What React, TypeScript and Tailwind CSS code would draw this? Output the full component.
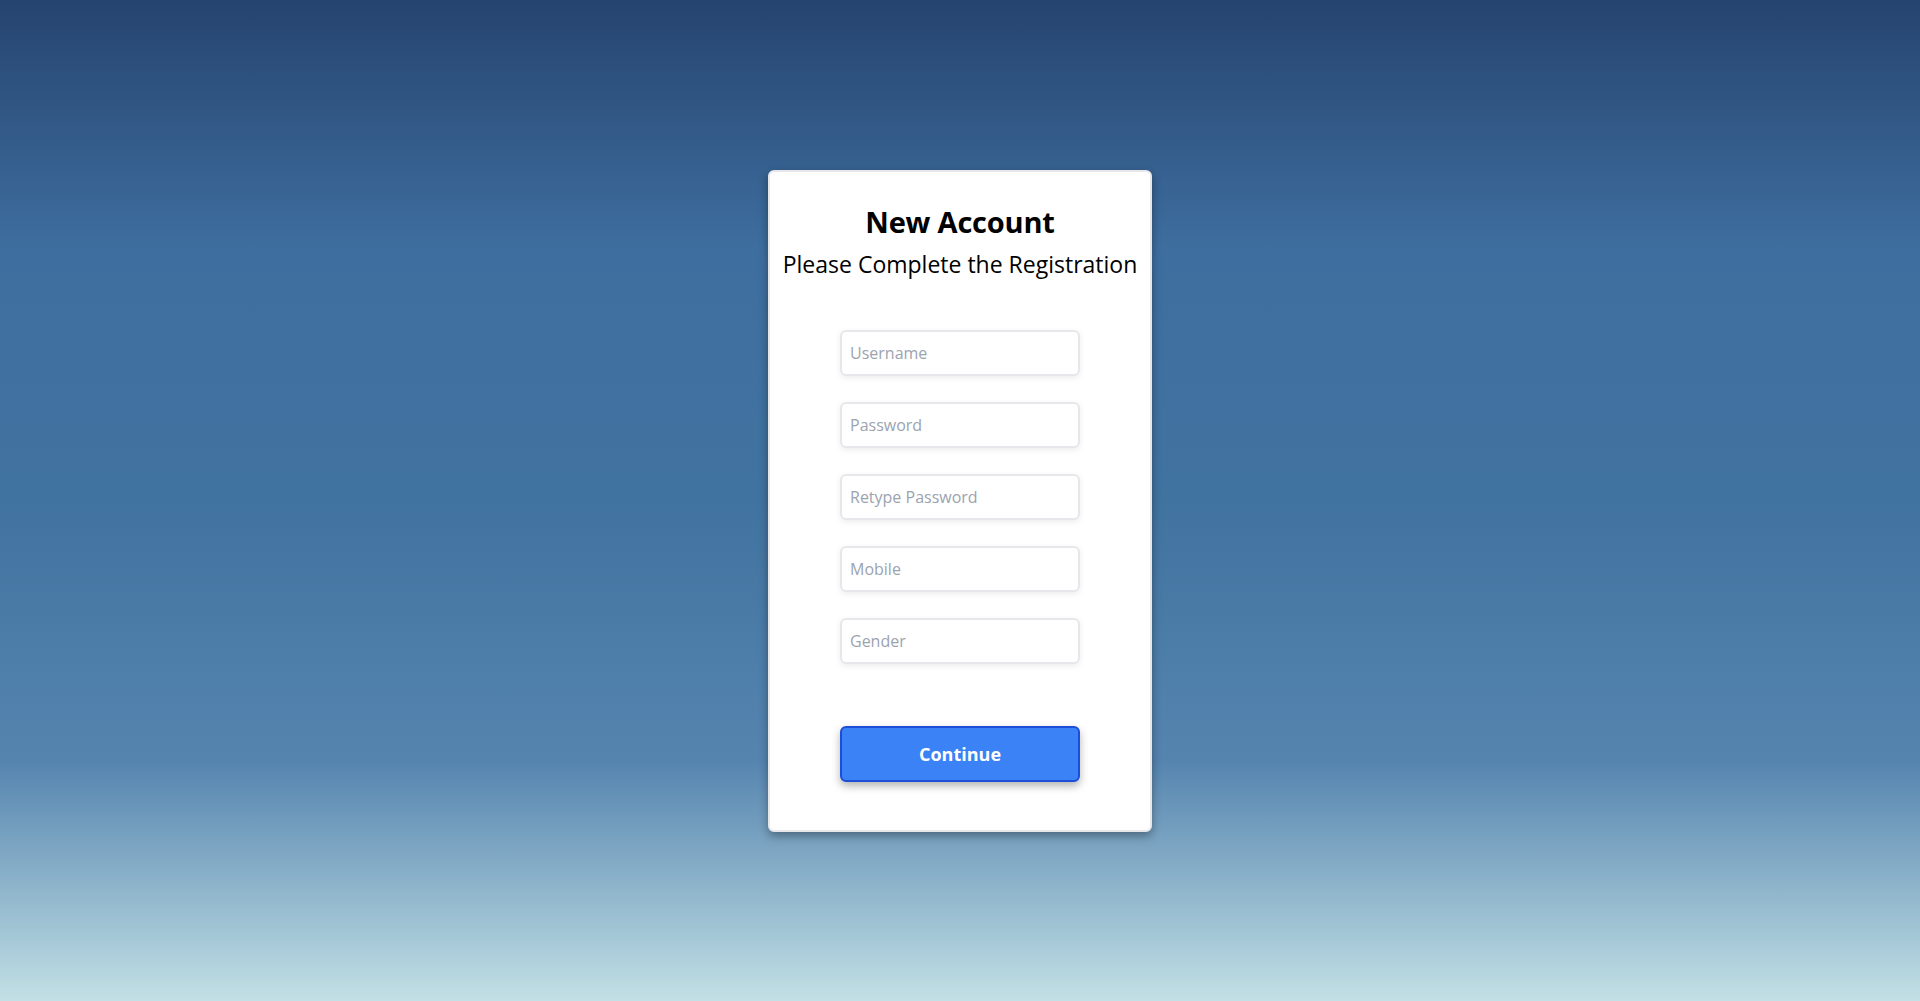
import React from "react";

const fields = ["Username", "Password", "Retype Password", "Mobile", "Gender"];

export default function App() {
  return (
    <div
      className="min-h-screen w-full flex items-center justify-center bg-[linear-gradient(to_bottom,#26446f_0%,#3e6e9f_25%,#4173a0_50%,#5584af_76%,#c2e0e5_100%)]"
      style={{ fontFamily: '"Open Sans", "Noto Sans", sans-serif' }}
    >
      <div className="w-96 h-[662px] bg-white rounded-md shadow-[0_4px_10px_rgba(0,0,0,0.35)] border-2 border-[#e7e7ea] flex flex-col items-center pt-[30px]">
        <h1 className="text-[29px] font-bold text-black leading-[40px] tracking-[-0.2px]">New Account</h1>
        <p className="text-[23px] text-black leading-[36px] mt-[4px]">Please Complete the Registration</p>
        <div className="flex flex-col gap-[26px] mt-[48px]">
          {fields.map((f) => (
            <input
              key={f}
              placeholder={f}
              className="w-60 h-[46px] px-[8px] border-2 border-[#e5e7eb] rounded-md shadow-[0_2px_6px_rgba(0,0,0,0.08)] text-base text-gray-800 placeholder:text-[#9ca3af] outline-none bg-white"
            />
          ))}
        </div>
        <button className="mt-[62px] w-60 h-14 bg-[#3b82f6] border-2 border-[#1d4ed8] rounded-md text-white font-bold text-lg shadow-[0_4px_8px_rgba(0,0,0,0.3)]">
          Continue
        </button>
      </div>
    </div>
  );
}
